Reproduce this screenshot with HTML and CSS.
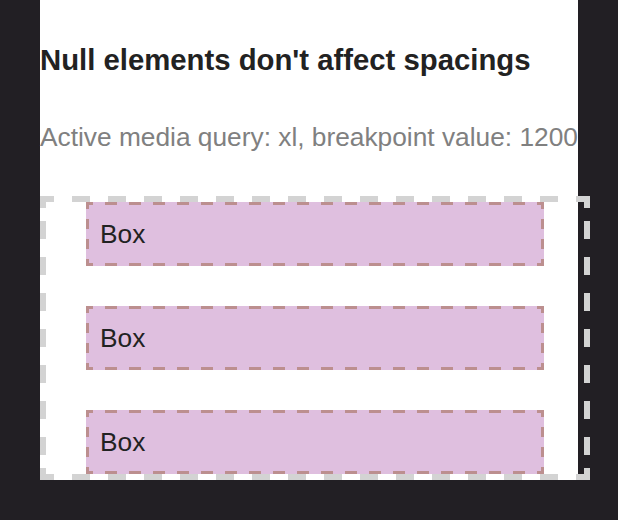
FILE: index.html
```html
<!DOCTYPE html>
<html>
<head>
<meta charset="utf-8">
<link rel="stylesheet" href="styles.css">
</head>
<body>
<div class="page">
  <h2 class="title">Null elements don't affect spacings</h2>
  <p class="subtitle">Active media query: xl, breakpoint value: 1200</p>
  <div class="stack">
    <div class="box">Box</div>
    <div class="box">Box</div>
    <div class="box">Box</div>
  </div>
</div>
</body>
</html>
```
FILE: styles.css
```css
html, body {
  margin: 0;
  padding: 0;
}
body {
  background: #221f24;
  font-family: "Liberation Sans", Arial, sans-serif;
  height: 520px;
}
.page {
  background: #ffffff;
  margin: 0 40px;
  padding-top: 45px;
}
.title {
  margin: 0;
  font-size: 29.3px;
  font-weight: bold;
  color: #222222;
  line-height: 30px;
  white-space: nowrap;
}
.subtitle {
  margin: 48px 0 0 0;
  font-size: 26.3px;
  line-height: 28px;
  color: #808080;
  white-space: nowrap;
}
.stack {
  --c: #d3d3d3;
  margin-top: 45px;
  box-sizing: border-box;
  width: 550px;
  border: 6px solid transparent;
  display: flex;
  flex-direction: column;
  gap: 40px;
  background-image:
    repeating-linear-gradient(90deg, var(--c) -4px 14px, transparent 14px 32px),
    repeating-linear-gradient(90deg, var(--c) -4px 14px, transparent 14px 32px),
    repeating-linear-gradient(180deg, var(--c) -11px 7px, transparent 7px 25px),
    repeating-linear-gradient(180deg, var(--c) -11px 7px, transparent 7px 25px),
    linear-gradient(var(--c), var(--c)),
    linear-gradient(var(--c), var(--c)),
    linear-gradient(var(--c), var(--c)),
    linear-gradient(var(--c), var(--c));
  background-size:
    100% 6px, 100% 6px, 6px 100%, 6px 100%,
    6px 12px, 6px 12px, 6px 12px, 6px 12px;
  background-position:
    left top, left bottom, left top, right top,
    left top, left bottom, right top, right bottom;
  background-repeat: no-repeat;
  background-origin: border-box;
  background-clip: border-box;
}
.box {
  --b: #bc8f8f;
  box-sizing: border-box;
  margin: 0 40px;
  height: 64px;
  border: 3px solid transparent;
  font-size: 26.3px;
  color: #222222;
  padding: 0 11px;
  display: flex;
  align-items: center;
  background-color: #dfbfdf;
  background-image:
    repeating-linear-gradient(90deg, var(--b) -5px 7px, transparent 7px 19px),
    repeating-linear-gradient(90deg, var(--b) -5px 7px, transparent 7px 19px),
    repeating-linear-gradient(180deg, var(--b) -3px 7px, transparent 7px 17px),
    repeating-linear-gradient(180deg, var(--b) -3px 7px, transparent 7px 17px);
  background-size: 100% 3px, 100% 3px, 3px 100%, 3px 100%;
  background-position: left top, left bottom, left top, right top;
  background-repeat: no-repeat;
  background-origin: border-box;
  background-clip: border-box;
}
```
